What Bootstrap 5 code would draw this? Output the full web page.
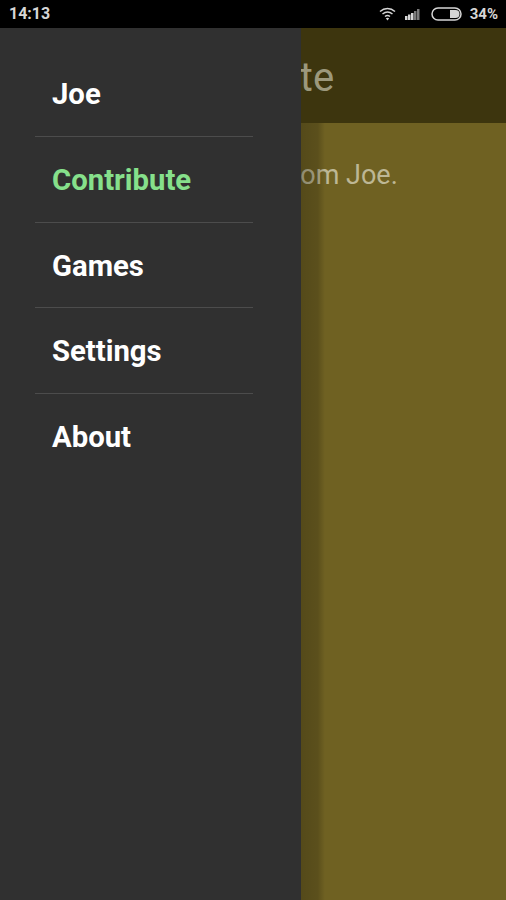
<!DOCTYPE html>
<html lang="en">
<head>
  <meta charset="UTF-8">
  <meta name="viewport" content="width=device-width, initial-scale=1.0">
  <title>Contribute</title>
  <link href="https://cdn.jsdelivr.net/npm/bootstrap@5.3.0/dist/css/bootstrap.min.css" rel="stylesheet">
  <style>
    body {
      background-color: #6f6122;
      font-family: Roboto, "Liberation Sans", sans-serif;
      overflow: hidden;
    }
    .phone {
      width: 506px;
      height: 900px;
    }
    .status-bar {
      height: 28px;
      background-color: #000;
      color: #d6d6d6;
      font-size: 15px;
      font-weight: 700;
      padding: 0 8px 0 9px;
    }
    .status-time {
      font-size: 16px;
    }
    .screen {
      height: 872px;
    }
    .app-header {
      height: 95px;
      background-color: #3d350e;
      color: #9c987c;
      font-size: 40px;
      padding-left: 148px;
      padding-top: 25px;
      line-height: 50px;
    }
    .app-body {
      background-color: #6f6122;
      color: #bdb795;
      font-size: 27px;
      padding-left: 282px;
      padding-top: 38px;
      line-height: 28px;
    }
    .drawer {
      position: absolute;
      top: 0;
      left: 0;
      bottom: 0;
      width: 301px;
      background-color: #303030;
      padding: 23px 48px 0 35px;
    }
    .drawer-shadow {
      position: absolute;
      top: 95px;
      left: 301px;
      bottom: 0;
      width: 24px;
      background: linear-gradient(to right, rgba(0, 0, 0, .24), rgba(0, 0, 0, .18) 70%, rgba(0, 0, 0, 0));
    }
    .drawer-item {
      height: 85.8px;
      padding: 27px 0 0 17px;
      font-size: 29.3px;
      line-height: 32px;
      font-weight: 700;
      color: #fff;
      border-bottom: 1.5px solid #4c4c4c;
    }
    .drawer-item:last-child {
      border-bottom: 0;
    }
    .drawer-item.is-active {
      color: #86e08b;
    }
  </style>
</head>
<body>
  <div class="phone d-flex flex-column">
    <div class="status-bar d-flex align-items-center justify-content-between">
      <span class="status-time">14:13</span>
      <div class="d-flex align-items-center">
        <svg width="17" height="14" viewBox="0 0 17 14" class="me-2">
          <path d="M1 4.500C5.500.5 11.500.5 16 4.500M3.500 7C6.500 4.500 10.500 4.500 13.500 7M6 9.500C7.500 8.300 9.500 8.300 11 9.500" fill="none" stroke="#d6d6d6" stroke-width="1.500"/>
          <path d="M8.500 13.500 6.800 11.300C7.800 10.600 9.200 10.600 10.200 11.300Z" fill="#d6d6d6"/>
        </svg>
        <svg width="19" height="12" viewBox="0 0 19 12" class="me-2">
          <path d="M1 8h2.500v4H1zM4 6.500h2.500V12H4zM7 5h2.500v7H7z" fill="#d6d6d6"/>
          <path d="M10 3h2.500v9H10zM13 1h2.500v11H13z" fill="#7a7a7a"/>
        </svg>
        <svg width="31" height="14" viewBox="0 0 31 14" class="me-2">
          <rect x="1" y="1" width="29" height="12" rx="6" fill="none" stroke="#d6d6d6" stroke-width="1.500"/>
          <path d="M19 3h5.500a4 4 0 0 1 0 8H19z" fill="#d6d6d6"/>
        </svg>
        <span>34%</span>
      </div>
    </div>
    <div class="screen position-relative overflow-hidden">
      <div class="app-header text-nowrap">Contribute</div>
      <div class="app-body text-nowrap">from Joe.</div>
      <div class="drawer-shadow"></div>
      <nav class="drawer">
        <div class="drawer-item">Joe</div>
        <div class="drawer-item is-active">Contribute</div>
        <div class="drawer-item">Games</div>
        <div class="drawer-item">Settings</div>
        <div class="drawer-item">About</div>
      </nav>
    </div>
  </div>
  <script src="https://cdn.jsdelivr.net/npm/bootstrap@5.3.0/dist/js/bootstrap.bundle.min.js"></script>
</body>
</html>
